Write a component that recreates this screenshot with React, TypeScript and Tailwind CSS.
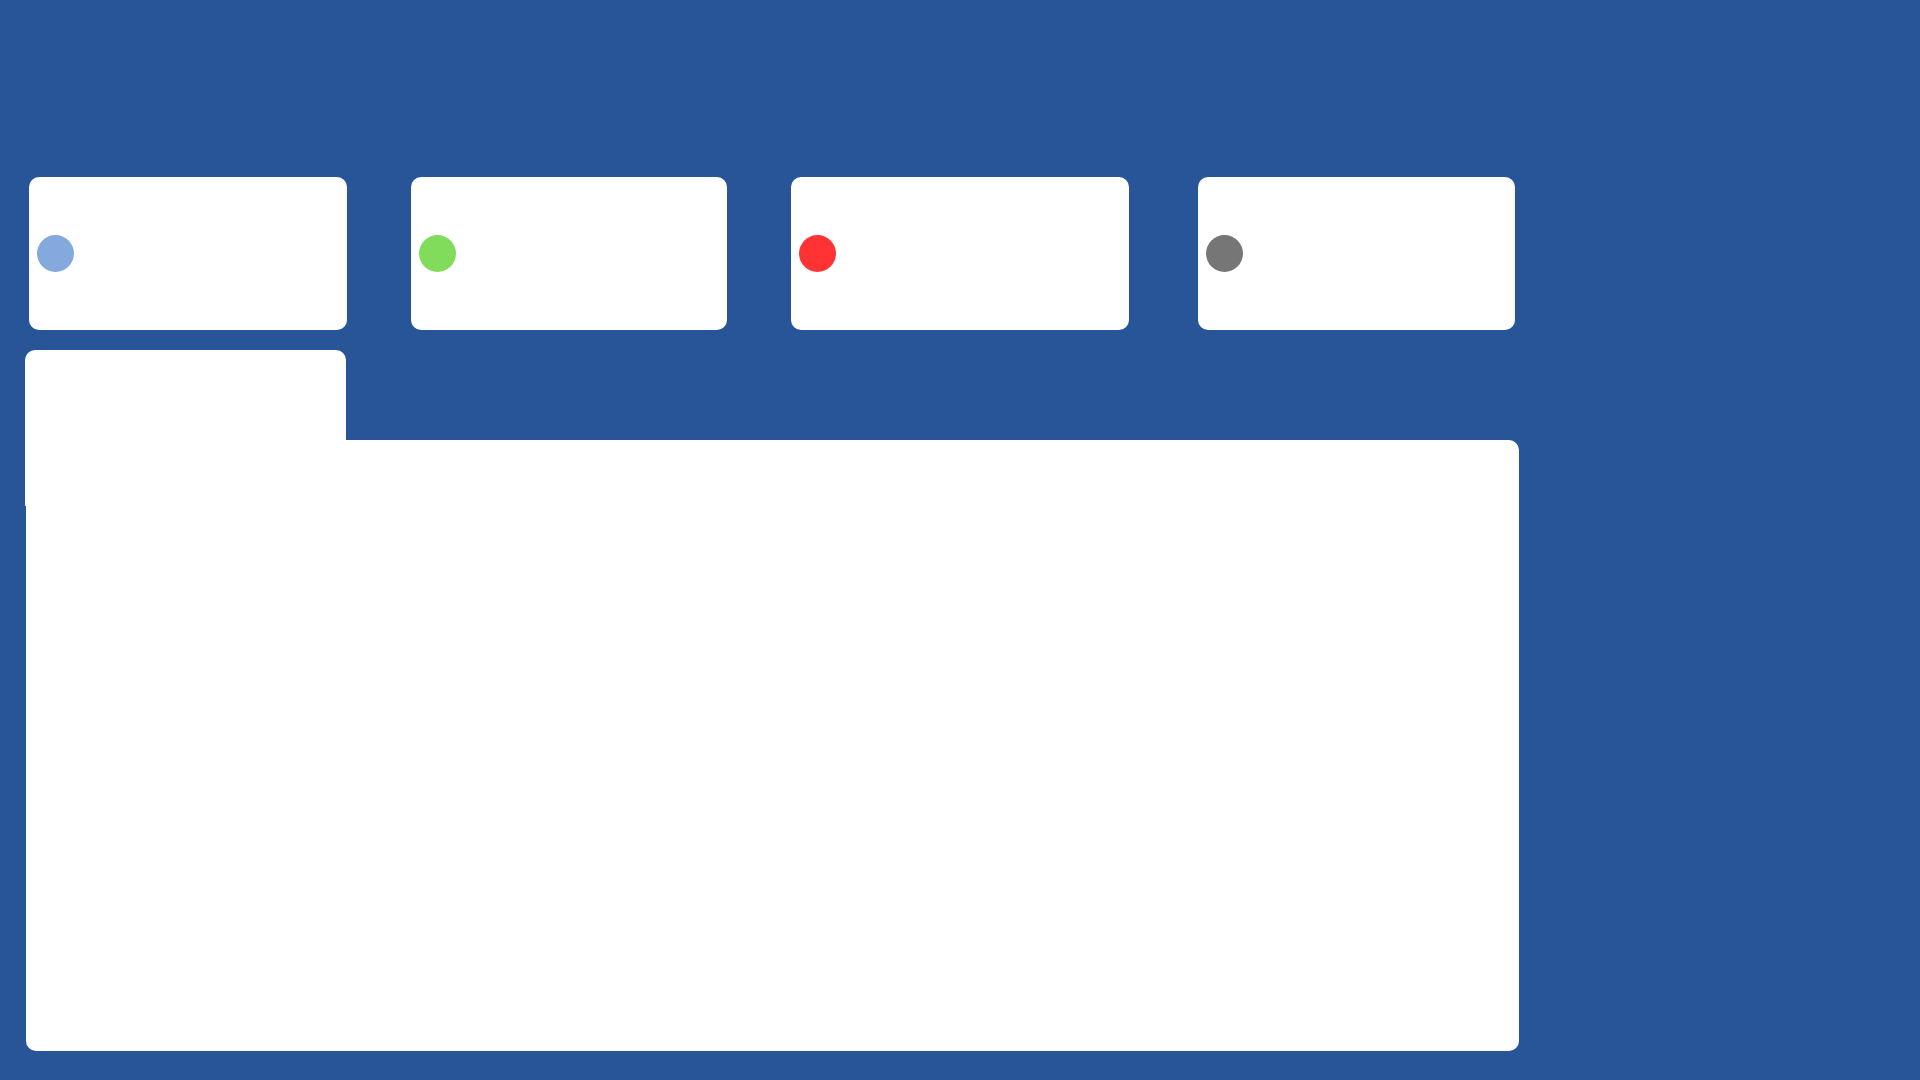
const stats = [
  { dot: 'bg-[#84aadd]', width: 'w-[318px]', gap: 'ml-[29px]' },
  { dot: 'bg-[#80dc5a]', width: 'w-[316px]', gap: 'ml-[64px]' },
  { dot: 'bg-[#ff3333]', width: 'w-[338px]', gap: 'ml-[64px]' },
  { dot: 'bg-[#767676]', width: 'w-[317px]', gap: 'ml-[69px]' },
];

const App = () => {
  return (
    <div className="w-[1920px] h-[1080px] overflow-hidden bg-[#285597] font-['Liberation_Sans',sans-serif]">
      {/* Status cards */}
      <div className="flex pt-[177px]">
        {stats.map((s, i) => (
          <div
            key={i}
            className={`${s.gap} ${s.width} h-[153px] bg-white rounded-[10px] flex items-center pl-2`}
          >
            <div className={`w-[37px] h-[37px] rounded-full ${s.dot}`}></div>
          </div>
        ))}
      </div>

      {/* Main area */}
      <div className="mt-[20px] flex flex-col">
        <div className="relative z-10 ml-[25px] w-[321px] h-[156px] bg-white rounded-t-[10px]"></div>
        <div className="-mt-[66px] ml-[26px] w-[1493px] h-[611px] bg-white rounded-[10px]"></div>
      </div>
    </div>
  );
};

export default App;
